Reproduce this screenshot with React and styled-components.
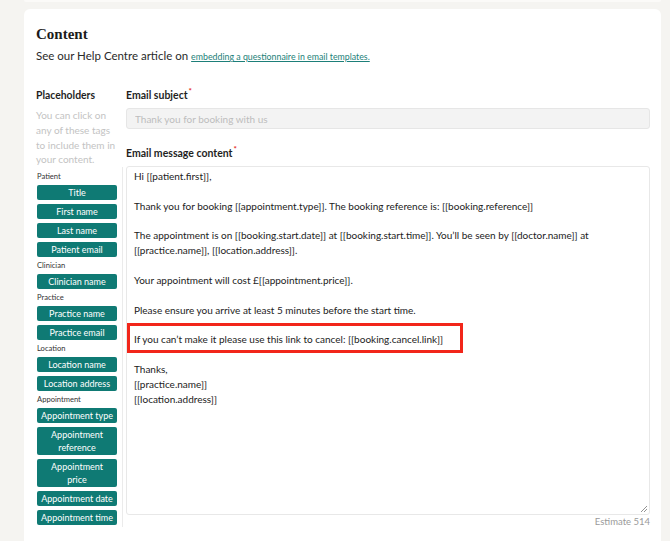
import React from 'react';
import styled, {createGlobalStyle} from 'styled-components';

const GlobalStyle = createGlobalStyle`
  html, body {
    margin: 0;
    padding: 0;
    background: #f5f4f1;
  }
  body {
    font-family: Lato, "Open Sans", sans-serif;
    color: #1f1f1f;
  }
`;

const Page = styled.div`
  padding: 0 9px 0 24px;
  height: 541px;
  overflow: hidden;
`;

const PrevCard = styled.div`
  height: 2px;
  background: #fbfaf8;
  border-radius: 0 0 6px 6px;
`;

const Card = styled.section`
  margin-top: 7px;
  background: #fff;
  border-radius: 6px;
  padding: 16px 11px 20px 12px;
  min-height: 560px;
`;

const Title = styled.h2`
  margin: 0;
  font-family: "Liberation Serif", "DejaVu Serif", serif;
  font-weight: 700;
  font-size: 15px;
  line-height: 18px;
  color: #1b1b1b;
`;

const Intro = styled.p`
  margin: 5px 0 0;
  font-size: 11.5px;
  line-height: 16px;
  color: #2a2a2a;
`;

const HelpLink = styled.a`
  font-size: 8.8px;
  color: #1d7f79;
  text-decoration: underline;
  margin-left: 3px;
`;

const Columns = styled.div`
  display: flex;
  margin-top: 23px;
`;

const Sidebar = styled.aside`
  width: 87px;
  flex-shrink: 0;
  display: flex;
  flex-direction: column;
`;

const SectionLabel = styled.h3`
  margin: 0;
  font-size: 10.4px;
  line-height: 14px;
  font-weight: 700;
  color: #1f1f1f;
`;

const Hint = styled.p`
  margin: 6px 0 0;
  max-width: 83px;
  font-size: 10px;
  line-height: 14.8px;
  color: #c3c3c3;
`;

const TagList = styled.div`
  padding: 5px 6px 2px 1px;
  border-right: 1px solid #ebebeb;
  display: flex;
  flex-direction: column;
  gap: 4px;
`;

const Group = styled.div`
  height: 9px;
  font-size: 7.6px;
  line-height: 9px;
  color: #333;
`;

const Tag = styled.button`
  width: 80px;
  padding: 1px 2px;
  border: none;
  border-radius: 2px;
  background: #0f7a74;
  color: #fff;
  font-family: inherit;
  font-size: 9px;
  line-height: 13px;
  text-align: center;
  white-space: pre-line;
  cursor: pointer;
`;

const Main = styled.div`
  flex: 1;
  padding-left: 3px;
  display: flex;
  flex-direction: column;
`;

const FieldLabel = styled.label`
  display: block;
  font-size: 10.5px;
  line-height: 14px;
  font-weight: 700;
  color: #1f1f1f;
  margin-top: ${p => p.$gap || 0}px;
`;

const Required = styled.sup`
  color: #e5261b;
  font-size: 8px;
  margin-left: 1px;
  vertical-align: 5px;
  line-height: 0;
`;

const SubjectInput = styled.input`
  box-sizing: border-box;
  width: 100%;
  height: 21px;
  margin-top: 6px;
  padding: 0 8px;
  border: 1px solid #e6e6e6;
  border-radius: 3px;
  background: #f3f3f3;
  font-family: inherit;
  font-size: 10px;
  &::placeholder {
    color: #bdbdbd;
  }
`;

const Editor = styled.div`
  position: relative;
  box-sizing: border-box;
  height: 349px;
  margin-top: 6px;
  padding: 2px 7px;
  border: 1px solid #e8e8e8;
  border-radius: 3px;
  background: #fff;
  font-size: 10px;
  line-height: 14.85px;
  color: #222;
`;

const Line = styled.div`
  min-height: 14.85px;
`;

const Annotation = styled.div`
  position: absolute;
  left: 0;
  top: 156px;
  width: 336px;
  height: 30px;
  box-sizing: border-box;
  border: 3px solid #f2261a;
`;

const Grip = styled.svg`
  position: absolute;
  right: 1px;
  bottom: 1px;
`;

const Counter = styled.div`
  text-align: right;
  font-size: 9.5px;
  line-height: 14px;
  color: #9a9a9a;
`;

const groups = [
    {name: 'Patient', tags: ['Title', 'First name', 'Last name', 'Patient email']},
    {name: 'Clinician', tags: ['Clinician name']},
    {name: 'Practice', tags: ['Practice name', 'Practice email']},
    {name: 'Location', tags: ['Location name', 'Location address']},
    {name: 'Appointment', tags: ['Appointment type', 'Appointment\nreference', 'Appointment\nprice', 'Appointment date', 'Appointment time']},
];

const body = [
    'Hi [[patient.first]],',
    '',
    'Thank you for booking [[appointment.type]]. The booking reference is: [[booking.reference]]',
    '',
    'The appointment is on [[booking.start.date]] at [[booking.start.time]]. You\u2019ll be seen by [[doctor.name]] at',
    '[[practice.name]], [[location.address]].',
    '',
    'Your appointment will cost \u00a3[[appointment.price]].',
    '',
    'Please ensure you arrive at least 5 minutes before the start time.',
    '',
    'If you can\u2019t make it please use this link to cancel: [[booking.cancel.link]]',
    '',
    'Thanks,',
    '[[practice.name]]',
    '[[location.address]]',
];

export default function App() {
    return (
        <>
            <GlobalStyle/>
            <Page>
                <PrevCard/>
                <Card>
                    <Title>Content</Title>
                    <Intro>
                        See our Help Centre article on
                        <HelpLink href="#">embedding a questionnaire in email templates.</HelpLink>
                    </Intro>
                    <Columns>
                        <Sidebar>
                            <SectionLabel>Placeholders</SectionLabel>
                            <Hint>You can click on any of these tags to include them in your content.</Hint>
                            <TagList>
                                {groups.map(group => (
                                    <React.Fragment key={group.name}>
                                        <Group>{group.name}</Group>
                                        {group.tags.map(tag => <Tag key={tag}>{tag}</Tag>)}
                                    </React.Fragment>
                                ))}
                            </TagList>
                        </Sidebar>
                        <Main>
                            <FieldLabel>Email subject<Required>*</Required></FieldLabel>
                            <SubjectInput placeholder="Thank you for booking with us"/>
                            <FieldLabel $gap={17}>Email message content<Required>*</Required></FieldLabel>
                            <Editor>
                                {body.map((line, i) => <Line key={i}>{line}</Line>)}
                                <Annotation/>
                                <Grip width="8" height="8" viewBox="0 0 8 8">
                                    <path d="M7 1 L1 7 M7 4 L4 7" stroke="#777" strokeWidth="0.8"/>
                                </Grip>
                            </Editor>
                            <Counter>Estimate 514</Counter>
                        </Main>
                    </Columns>
                </Card>
            </Page>
        </>
    );
}
